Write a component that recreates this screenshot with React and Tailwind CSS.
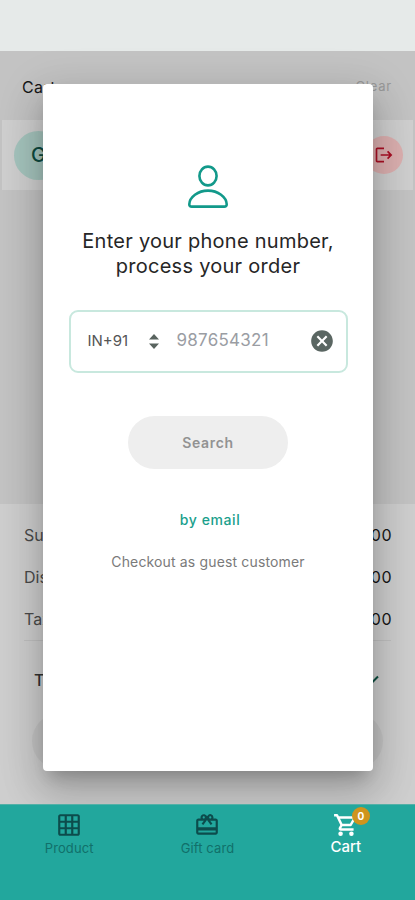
import React from 'react';
import { MdCardGiftcard, MdCancel, MdGridOn, MdLogout } from 'react-icons/md';

const SUMMARY = [
  { label: 'Subtotal', value: '0.00' },
  { label: 'Discount', value: '0.00' },
  { label: 'Tax', value: '0.00' },
];

/* ---------------- CART PAGE (DIMMED) ---------------- */
const CartPage = () => (
  <div className="flex h-[753px] flex-col bg-[#c3c3c3]">
    <div className="flex h-[69px] items-center justify-between pt-[2px] pr-[23px] pl-[22px]">
      <h1 className="text-[16px] tracking-[0.4px] text-[#171717]">Cart</h1>
      <span className="pt-px text-[13px] tracking-[0.8px] text-[#999]">Clear</span>
    </div>

    <div className="mx-[2px] flex h-[70px] items-center justify-between bg-[#cfcfcf] pr-[10px] pl-[12px]">
      <div className="flex h-[49px] w-[49px] items-center justify-center rounded-full bg-[#a5c4bd] text-[20px] font-medium text-[#0e4a40]">
        G
      </div>
      <div className="flex h-[38px] w-[38px] items-center justify-center rounded-full bg-[#dcb0b0]">
        <MdLogout className="h-[20px] w-[20px] text-[#ab0f24]" />
      </div>
    </div>

    <div className="h-[314px]" />

    <div className="flex-1 bg-[#cecece] px-[24px] pt-[10px]">
      {SUMMARY.map((row) => (
        <div key={row.label} className="-mr-px flex h-[42px] items-center justify-between text-[16px]">
          <span className="text-[#4b4b4b]">{row.label}</span>
          <span className="tracking-[0.5px] text-[#171717]">{row.value}</span>
        </div>
      ))}
      <div className="h-px bg-[#c0c0c0]" />
      <div className="flex h-[72px] items-center justify-between pt-[5px] pr-[12px] pl-[10px]">
        <span className="text-[16px] font-medium text-[#333]">Total</span>
        <svg width="14" height="9" viewBox="0 0 14 9" fill="none" stroke="#0e4f40" strokeWidth="2">
          <path d="M1 1.5l6 6 6-6" />
        </svg>
      </div>
      <div className="mx-[8px] h-[56px] rounded-full bg-[#c4c4c4]" />
    </div>
  </div>
);

/* ---------------- BOTTOM NAV ---------------- */
const CartIcon = () => (
  <svg width="26" height="26" viewBox="0 0 24 24" fill="none" stroke="currentColor" strokeWidth="2.3">
    <path d="M1 3h2.7l4.3 9-1.6 2.8c-.4.7.1 1.3.8 1.3H19M4.8 5H20.3l-4 7H8" strokeLinejoin="round" />
    <circle cx="7" cy="20" r="2.1" fill="currentColor" stroke="none" />
    <circle cx="17" cy="20" r="2.1" fill="currentColor" stroke="none" />
  </svg>
);

const BottomNav = () => (
  <nav className="grid h-[96px] grid-cols-3 border-t border-[#53b0a7] bg-[#22a79d] text-[#11706a]">
    <div className="flex flex-col items-center pt-[7px]">
      <MdGridOn className="h-[26px] w-[26px] text-[#0c4c4c]" />
      <span className="mt-px text-[13px] leading-[18px] tracking-[0.1px]">Product</span>
    </div>
    <div className="flex flex-col items-center pt-[7px]">
      <MdCardGiftcard className="h-[26px] w-[26px] text-[#0c4c4c]" />
      <span className="mt-px text-[13px] leading-[18px] tracking-[0.1px]">Gift card</span>
    </div>
    <div className="flex flex-col items-center pt-[7px] text-white">
      <div className="relative">
        <CartIcon />
        <span className="absolute -top-[5px] -right-[11px] flex h-[18px] w-[18px] items-center justify-center rounded-full bg-[#cf941d] text-[10px] font-bold">
          0
        </span>
      </div>
      <span className="text-[15px] font-medium leading-[18px]">Cart</span>
    </div>
  </nav>
);

/* ---------------- CUSTOMER DIALOG ---------------- */
const CustomerDialog = () => (
  <div className="absolute top-[84px] left-[43px] flex h-[687px] w-[330px] flex-col items-center rounded-[4px] bg-white pt-[81px] shadow-[0_11px_15px_-7px_rgba(0,0,0,0.2),0_20px_38px_3px_rgba(0,0,0,0.18),0_9px_46px_8px_rgba(0,0,0,0.08)]">
    <svg width="42" height="44" viewBox="0 0 42 44" fill="none" stroke="#12998a" strokeWidth="2.6">
      <ellipse cx="21" cy="11" rx="8.6" ry="9.4" />
      <path d="M21 25.6C11 25.6 2.5 32 2.3 39.2Q2.2 41.6 4.8 41.6H37.2Q39.8 41.6 39.7 39.2C39.5 32 31 25.6 21 25.6Z" />
    </svg>

    <h2 className="mt-[20px] text-center text-[20px] leading-[25px] tracking-[0.26px] text-[#262626]">
      Enter your phone number,
      <br />
      process your order
    </h2>

    <div className="mt-[31px] flex h-[63px] w-[279px] items-center rounded-[9px] border-2 border-[#c8e8de] pr-[11px] pb-px pl-[17px]">
      <span className="w-[61px] text-[15px] text-[#555]">IN+91</span>
      <svg width="10" height="15" viewBox="0 0 10 15" fill="#59645f">
        <path d="M0 5.5L5 0l5 5.5zM0 9.5L5 15l5-5.5z" />
      </svg>
      <span className="ml-[18px] flex-1 text-[17px] tracking-[0.25px] text-[#9a9da3]">987654321</span>
      <MdCancel className="h-[26px] w-[26px] text-[#5a6662]" />
    </div>

    <button className="mt-[43px] h-[53px] w-[160px] rounded-full bg-[#eee] pb-px text-[14px] font-semibold tracking-[0.7px] text-[#929292]">
      Search
    </button>
    <button className="mt-[41px] pl-[4px] text-[14px] font-medium leading-[20px] tracking-[0.6px] text-[#1aa08c]">
      by email
    </button>
    <button className="mt-[22px] text-[14px] leading-[20px] tracking-[0.15px] text-[#7a7a7a]">
      Checkout as guest customer
    </button>
  </div>
);

const App = () => (
  <div className="relative h-[900px] w-[415px] overflow-hidden bg-[#e6eae9] font-['Inter',sans-serif]">
    <div className="h-[51px]" />
    <CartPage />
    <CustomerDialog />
    <div className="relative">
      <BottomNav />
    </div>
  </div>
);

export default App;
